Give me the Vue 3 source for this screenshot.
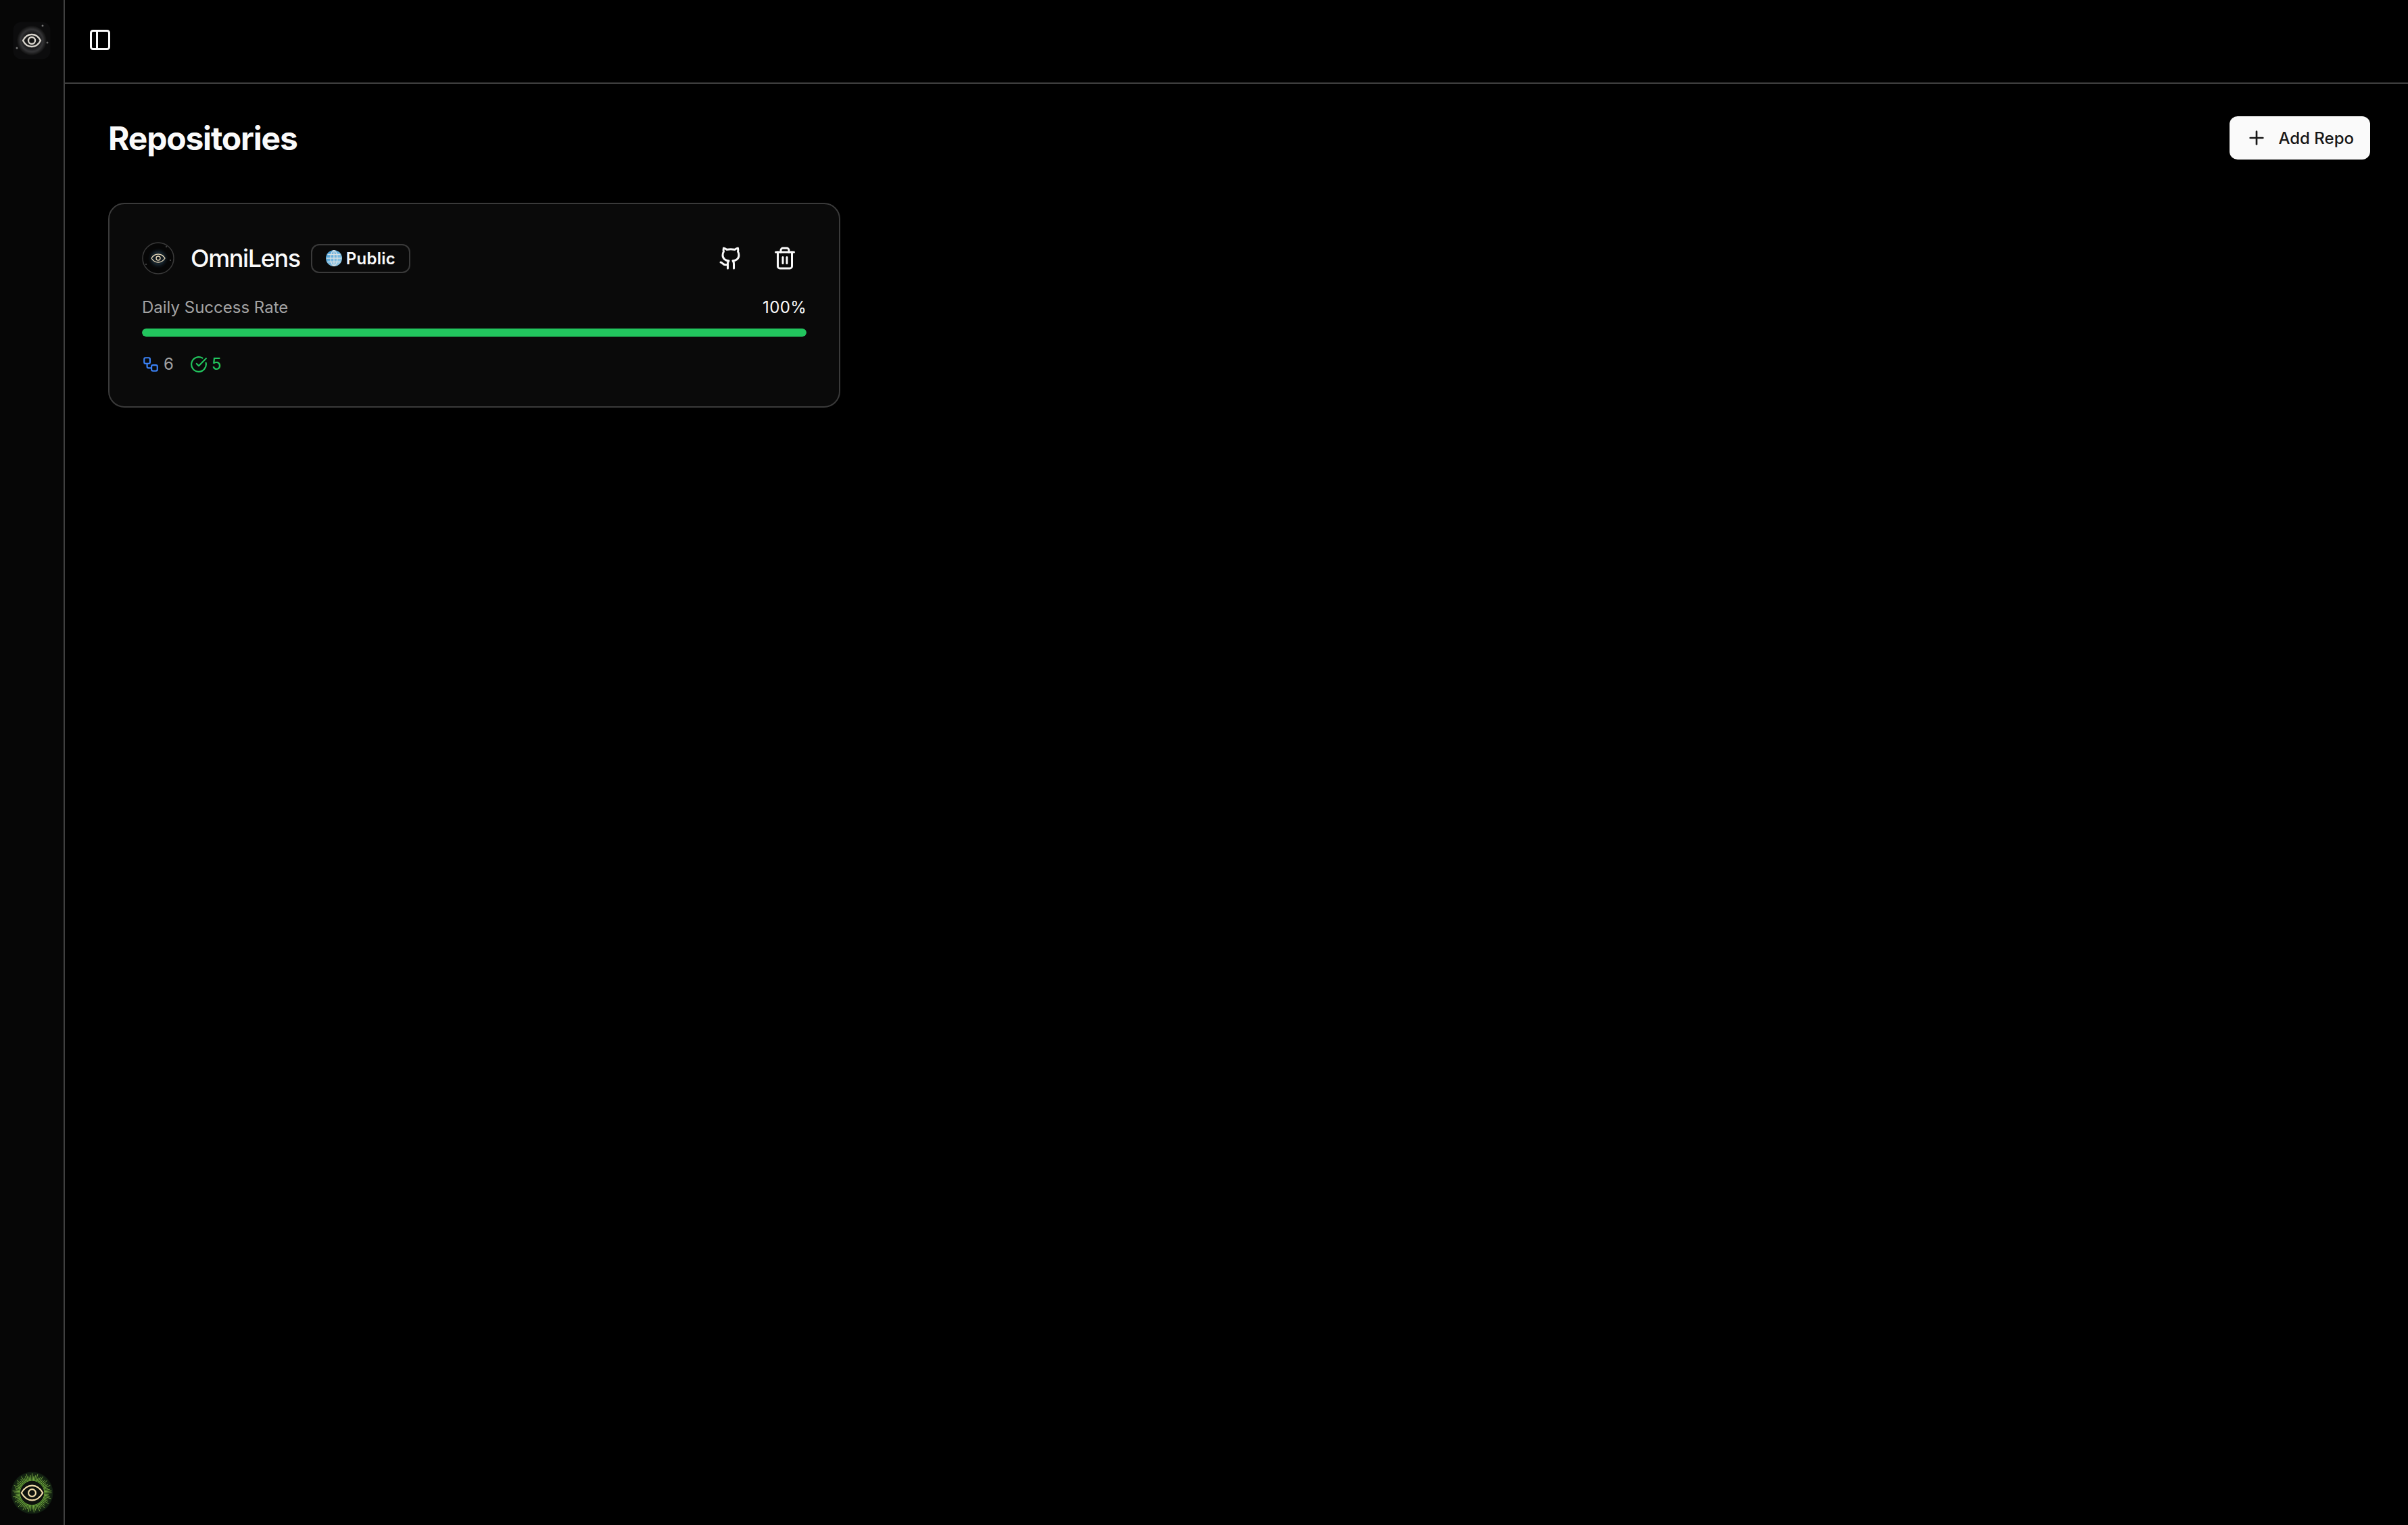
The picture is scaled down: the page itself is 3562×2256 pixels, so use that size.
<template>
  <div class="layout">
    <aside class="sidebar">
      <svg class="logo" viewBox="0 0 56 56">
        <defs>
          <radialGradient id="lens" cx="50%" cy="50%" r="50%">
            <stop offset="0%" stop-color="#111" />
            <stop offset="55%" stop-color="#1c1c1e" />
            <stop offset="75%" stop-color="#343436" />
            <stop offset="100%" stop-color="#0e0e0e" />
          </radialGradient>
        </defs>
        <rect x=".5" y=".5" width="55" height="55" rx="12" fill="#0c0c0d" />
        <circle cx="28" cy="28" r="22" fill="url(#lens)" />
        <circle cx="44" cy="6" r="1.5" fill="#777" />
        <circle cx="51" cy="31" r="1.5" fill="#666" />
        <circle cx="6" cy="39" r="1.5" fill="#777" />
        <path d="M15 28c3-6 8-9 13-9s10 3 13 9c-3 6-8 9-13 9s-10-3-13-9z" fill="none" stroke="#d8d4cc" stroke-width="2.4" />
        <circle cx="28" cy="28" r="5" fill="none" stroke="#d8d4cc" stroke-width="2.4" />
      </svg>

      <svg class="logo-bottom" viewBox="0 0 64 64">
        <defs>
          <radialGradient id="glow" cx="50%" cy="50%" r="50%">
            <stop offset="55%" stop-color="#3a6b20" />
            <stop offset="80%" stop-color="#1a3014" />
            <stop offset="100%" stop-color="#0f1a10" />
          </radialGradient>
        </defs>
        <circle cx="32" cy="32" r="31.500" fill="url(#glow)" />
        <line
          v-for="ray in rays"
          :key="ray.id"
          :x1="ray.x1"
          :y1="ray.y1"
          :x2="ray.x2"
          :y2="ray.y2"
          stroke="#9ad455"
          stroke-width=".8"
          stroke-opacity=".85"
        />
        <circle cx="32" cy="32" r="18" fill="#0e120e" />
        <path d="M16 32c4-7 10-11 16-11s12 4 16 11c-4 7-10 11-16 11s-12-4-16-11z" fill="none" stroke="#f0dcaa" stroke-width="2.200" />
        <circle cx="32" cy="32" r="5.500" fill="none" stroke="#f0dcaa" stroke-width="2.200" />
      </svg>
    </aside>

    <div class="main">
      <header class="topbar">
        <svg class="icon toggle" viewBox="0 0 24 24">
          <rect x="3" y="3" width="18" height="18" rx="2" />
          <path d="M9 3v18" />
        </svg>
      </header>

      <div class="content">
        <div class="page-head">
          <h1 class="page-title">Repositories</h1>
          <button class="add-btn">
            <svg class="icon plus" viewBox="0 0 24 24">
              <path d="M5 12h14" />
              <path d="M12 5v14" />
            </svg>
            Add Repo
          </button>
        </div>

        <div class="repo-grid">
          <article v-for="repo in repos" :key="repo.name" class="repo-card">
            <div class="repo-head">
              <div class="repo-name">
                <svg class="avatar" viewBox="0 0 48 48">
                  <defs>
                    <radialGradient id="avatarFill" cx="50%" cy="50%" r="50%">
                      <stop offset="0%" stop-color="#0d1216" />
                      <stop offset="60%" stop-color="#16232c" />
                      <stop offset="80%" stop-color="#0b1014" />
                      <stop offset="100%" stop-color="#060606" />
                    </radialGradient>
                  </defs>
                  <circle cx="24" cy="24" r="23" fill="#060606" stroke="#3a3a3a" stroke-width="1.500" />
                  <circle cx="24" cy="24" r="15" fill="url(#avatarFill)" />
                  <circle cx="36" cy="7" r=".8" fill="#888" />
                  <circle cx="42" cy="27" r=".8" fill="#888" />
                  <circle cx="6" cy="33" r=".8" fill="#888" />
                  <path d="M14 24c2.500-4 6-6 10-6s7.500 2 10 6c-2.500 4-6 6-10 6s-7.500-2-10-6z" fill="none" stroke="#e0d2b4" stroke-width="1.400" />
                  <circle cx="24" cy="24" r="3" fill="none" stroke="#e0d2b4" stroke-width="1.400" />
                </svg>
                <h2 class="repo-title">{{ repo.name }}</h2>
                <span class="badge">
                  <svg class="globe" viewBox="0 0 24 24">
                    <defs>
                      <linearGradient id="globeFill" x1="0" y1="0" x2="1" y2="1">
                        <stop offset="0%" stop-color="#3f9ad6" />
                        <stop offset="100%" stop-color="#9fcfe6" />
                      </linearGradient>
                    </defs>
                    <circle cx="12" cy="12" r="12" fill="url(#globeFill)" />
                    <path d="M1 12h22M2.500 6.500h19M2.500 17.500h19M12 0v24M12 0c-6.500 4-6.500 20 0 24M12 0c6.500 4 6.500 20 0 24" fill="none" stroke="#d6dfe3" stroke-width="1.300" />
                  </svg>
                  {{ repo.visibility }}
                </span>
              </div>

              <div class="repo-actions">
                <button class="icon-btn">
                  <svg class="icon" viewBox="0 0 24 24">
                    <path d="M15 22v-4a4.800 4.800 0 0 0-1-3.500c3 0 6-2 6-5.500.08-1.250-.27-2.480-1-3.500.28-1.150.28-2.350 0-3.500 0 0-1 0-3 1.500-2.640-.5-5.360-.5-8 0C6 2 5 2 5 2c-.3 1.150-.3 2.350 0 3.500A5.403 5.403 0 0 0 4 9c0 3.500 3 5.500 6 5.500-.39.49-.68 1.050-.85 1.650-.17.6-.22 1.230-.15 1.850v4" />
                    <path d="M9 18c-4.510 2-5-2-7-2" />
                  </svg>
                </button>
                <button class="icon-btn">
                  <svg class="icon" viewBox="0 0 24 24">
                    <path d="M3 6h18" />
                    <path d="M19 6v14c0 1-1 2-2 2H7c-1 0-2-1-2-2V6" />
                    <path d="M8 6V4c0-1 1-2 2-2h4c1 0 2 1 2 2v2" />
                    <path d="M10 11v6" />
                    <path d="M14 11v6" />
                  </svg>
                </button>
              </div>
            </div>

            <div class="rate-row">
              <span class="rate-label">Daily Success Rate</span>
              <span class="rate-value">{{ repo.rate }}%</span>
            </div>
            <div class="progress">
              <div class="progress-fill" :style="{ width: repo.rate + '%' }"></div>
            </div>

            <div class="stats">
              <span class="stat">
                <svg class="icon stat-icon blue" viewBox="0 0 24 24">
                  <rect x="3" y="3" width="8" height="8" rx="2" />
                  <path d="M7 11v4a2 2 0 0 0 2 2h4" />
                  <rect x="13" y="13" width="8" height="8" rx="2" />
                </svg>
                {{ repo.workflows }}
              </span>
              <span class="stat green">
                <svg class="icon stat-icon green" viewBox="0 0 24 24">
                  <path d="M21.801 10A10 10 0 1 1 17 3.335" />
                  <path d="m9 11 3 3L22 4" />
                </svg>
                {{ repo.passed }}
              </span>
            </div>
          </article>
        </div>
      </div>
    </div>
  </div>
</template>

<script setup>
const repos = [
  { name: 'OmniLens', visibility: 'Public', rate: 100, workflows: 6, passed: 5 }
]

// rays around the bottom badge
const rays = []
for (let i = 0; i < 64; i++) {
  const a = (i / 64) * Math.PI * 2
  const outer = i % 3 === 0 ? 29.5 : i % 3 === 1 ? 25 : 27
  rays.push({
    id: i,
    x1: 32 + Math.cos(a) * 18,
    y1: 32 + Math.sin(a) * 18,
    x2: 32 + Math.cos(a) * outer,
    y2: 32 + Math.sin(a) * outer
  })
}
</script>

<style scoped>
.layout {
  display: flex;
  height: 2256px;
  background: #000;
  color: #fafafa;
  font-family: Inter, "Liberation Sans", sans-serif;
}

.sidebar {
  width: 96px;
  flex-shrink: 0;
  box-sizing: border-box;
  border-right: 2px solid #404040;
  background: #060606;
  display: flex;
  flex-direction: column;
  justify-content: space-between;
  align-items: center;
  padding: 32px 0 16px;
}

.logo {
  width: 56px;
  height: 56px;
}

.logo-bottom {
  width: 63px;
  height: 63px;
}

.main {
  flex: 1;
  min-width: 0;
}

.topbar {
  height: 122px;
  border-bottom: 2px solid #404040;
  display: flex;
  align-items: center;
  padding-left: 34px;
}

.icon {
  width: 36px;
  height: 36px;
  fill: none;
  stroke: currentColor;
  stroke-width: 2;
  stroke-linecap: round;
  stroke-linejoin: round;
}

.toggle {
  margin-bottom: 5px;
}

.content {
  padding: 48px 56px 0 64px;
}

.page-head {
  display: flex;
  justify-content: space-between;
  align-items: center;
  margin-bottom: 64px;
}

.page-title {
  margin: 2px 0 0;
  font-size: 48px;
  font-weight: 700;
  line-height: 62px;
  letter-spacing: -1.2px;
}

.add-btn {
  height: 64px;
  padding: 0 24px;
  display: flex;
  align-items: center;
  gap: 16px;
  border: none;
  border-radius: 12px;
  background: #fafafa;
  color: #171717;
  font-family: inherit;
  font-size: 24px;
  font-weight: 500;
}

.plus {
  width: 32px;
  height: 32px;
}

.repo-grid {
  display: grid;
  grid-template-columns: repeat(3, 1fr);
  gap: 48px;
}

.repo-card {
  border: 2px solid #3a3a3a;
  border-radius: 24px;
  background: #0a0a0a;
  padding: 48px 48px 46px;
}

.repo-head {
  display: flex;
  justify-content: space-between;
  align-items: center;
  height: 64px;
}

.repo-name {
  display: flex;
  align-items: center;
}

.avatar {
  width: 48px;
  height: 48px;
  margin-right: 24px;
}

.repo-title {
  margin: 0 16px 0 0;
  font-size: 36px;
  font-weight: 500;
  line-height: 48px;
  letter-spacing: -1.4px;
}

.badge {
  display: flex;
  align-items: center;
  gap: 6px;
  height: 43px;
  box-sizing: border-box;
  padding: 0 20px;
  border: 2px solid #3a3a3a;
  border-radius: 12px;
  font-size: 24px;
  font-weight: 600;
  letter-spacing: 0.3px;
}

.globe {
  width: 24px;
  height: 24px;
}

.repo-actions {
  display: flex;
  gap: 16px;
}

.icon-btn {
  width: 64px;
  height: 64px;
  padding: 0;
  display: flex;
  align-items: center;
  justify-content: center;
  border: none;
  background: transparent;
  color: #fafafa;
}

.rate-row {
  display: flex;
  justify-content: space-between;
  margin-top: 25px;
  font-size: 24px;
  line-height: 32px;
}

.rate-label {
  color: #a3a3a3;
}

.rate-value {
  letter-spacing: 0.4px;
}

.progress {
  margin-top: 15px;
  height: 12px;
  border-radius: 6px;
  background: #262626;
  overflow: hidden;
}

.progress-fill {
  height: 100%;
  border-radius: 6px;
  background: #22c55e;
}

.stats {
  display: flex;
  gap: 24px;
  margin-top: 25px;
  font-size: 24px;
  line-height: 32px;
  color: #a3a3a3;
}

.stat {
  display: flex;
  align-items: center;
  gap: 6px;
}

.stat-icon {
  width: 26px;
  height: 26px;
}

.blue {
  color: #3b82f6;
}

.green {
  color: #22c55e;
}
</style>

<style>
html,
body {
  background: #000;
  overflow: hidden;
}
</style>
